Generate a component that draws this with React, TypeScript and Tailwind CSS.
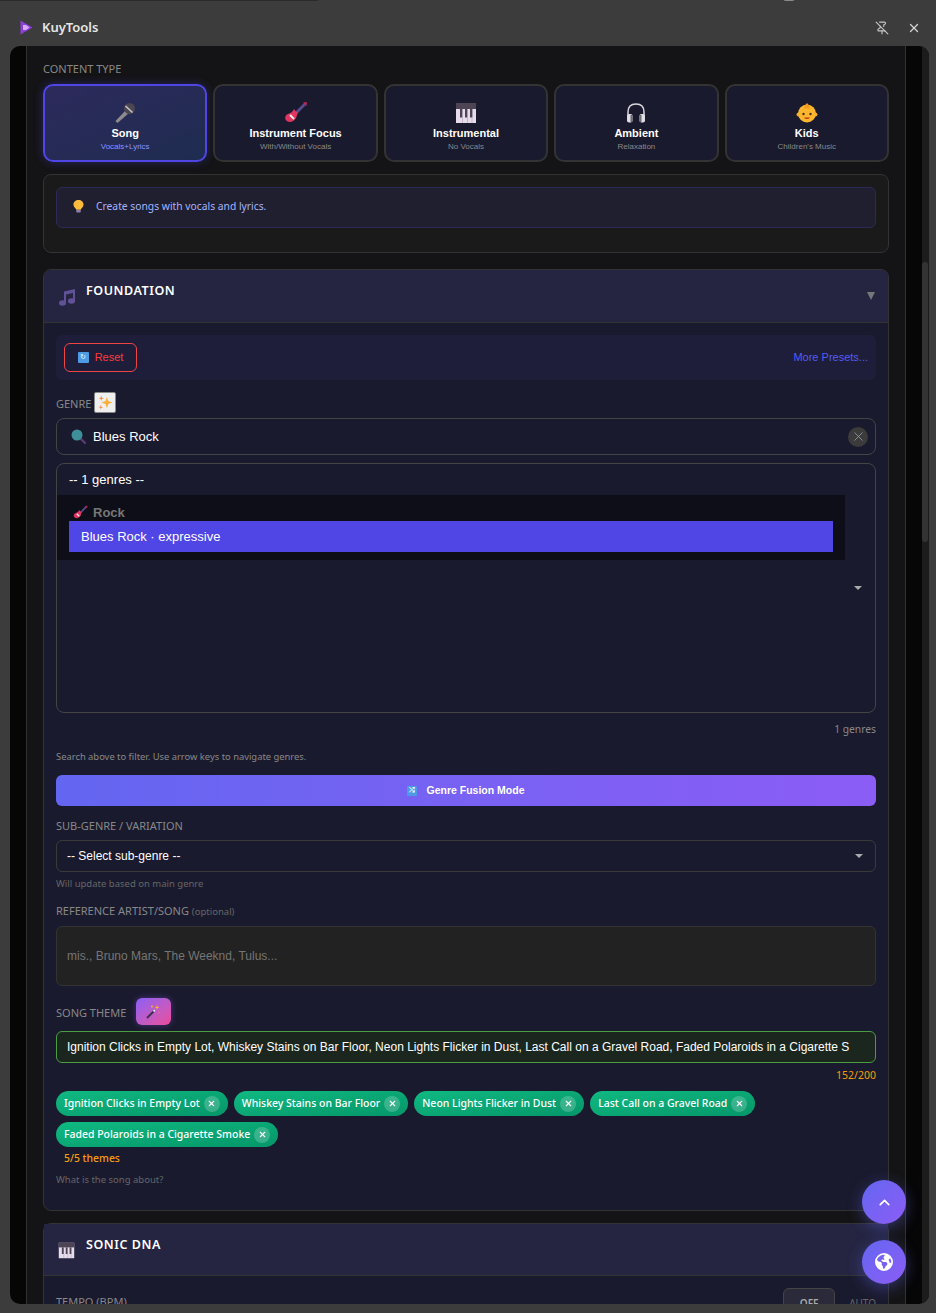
import { ChevronUp, PinOff, X } from 'lucide-react';
import { FaEarthAmericas } from 'react-icons/fa6';

const ui = "font-['Noto_Sans',sans-serif]";
const arial = "font-['Liberation_Sans',Arial,sans-serif]";

function Mic({ size = 24 }: { size?: number }) {
  return (
    <svg width={size} height={size} viewBox="0 0 24 24">
      <path d="M13 9 L2.500 20 L4.500 22 L16 12 Z" fill="#8e8a90" />
      <circle cx="16.500" cy="7.500" r="5.500" fill="#4b4650" />
      <path d="M12.500 5 L19.500 11.500" stroke="#c9c5cc" strokeWidth="1.600" />
    </svg>
  );
}

function Guitar({ size = 24 }: { size?: number }) {
  return (
    <svg width={size} height={size} viewBox="0 0 24 24">
      <path d="M11 11 L20 2 L22 4 L13 13 Z" fill="#5b4a8a" />
      <path d="M19 1.500 L23 1 L22.500 5 Z" fill="#c2255c" />
      <path d="M10 8 C11 10 13 11 14 12 C13 13 13 15 12 17 C10 21 5 22 3 20 C0 18 1 14 4 13 C6 12 8 12 10 8 Z" fill="#e0355f" />
      <path d="M6 14 L10 18" stroke="#f4e9ee" strokeWidth="2" />
    </svg>
  );
}

function Piano({ size = 22 }: { size?: number }) {
  return (
    <svg width={size} height={size} viewBox="0 0 22 22">
      <rect x="1" y="1" width="20" height="20" fill="#e7dcec" />
      <rect x="1" y="1" width="20" height="6" fill="#4d4553" />
      <rect x="5" y="7" width="2.400" height="8.500" fill="#4d4553" />
      <rect x="10" y="7" width="2.400" height="8.500" fill="#4d4553" />
      <rect x="15" y="7" width="2.400" height="8.500" fill="#4d4553" />
      <path d="M7.500 15.500 V21 M12.500 15.500 V21 M17 15.500 V21" stroke="#b5a8c0" strokeWidth="0.700" />
    </svg>
  );
}

function Headphones() {
  return (
    <svg width="22" height="22" viewBox="0 0 22 22">
      <path d="M3 14 V10 C3 4.500 6.500 2 11 2 C15.500 2 19 4.500 19 10 V14" fill="none" stroke="#d8d5da" strokeWidth="1.500" />
      <rect x="2" y="12" width="5.500" height="8.500" rx="2" fill="#e0dde3" />
      <rect x="14.500" y="12" width="5.500" height="8.500" rx="2" fill="#e0dde3" />
      <rect x="5.500" y="13" width="2" height="7" fill="#6f6b74" />
      <rect x="14.500" y="13" width="2" height="7" fill="#6f6b74" />
    </svg>
  );
}

function Baby() {
  return (
    <svg width="22" height="22" viewBox="0 0 22 22">
      <circle cx="2.500" cy="12.500" r="2" fill="#f4a722" />
      <circle cx="19.500" cy="12.500" r="2" fill="#f4a722" />
      <circle cx="11" cy="11.500" r="9" fill="#fbb62e" />
      <path d="M11 1 C13 3 14 5 13.500 7 C12 6 10 6 8.500 7 C8 5 9 3 11 1 Z" fill="#f59a1b" />
      <circle cx="7.500" cy="12" r="1.200" fill="#4a2c14" />
      <circle cx="14.500" cy="12" r="1.200" fill="#4a2c14" />
      <path d="M8 15.500 C9.500 17.500 12.500 17.500 14 15.500 Z" fill="#c2381c" />
    </svg>
  );
}

function Bulb() {
  return (
    <svg width="11" height="15" viewBox="0 0 12 15">
      <path d="M6 0.500 C9 0.500 11.500 2.500 11.500 5.500 C11.500 8 9 9 8.500 11 H3.500 C3 9 0.500 8 0.500 5.500 C0.500 2.500 3 0.500 6 0.500 Z" fill="#fdbc3c" />
      <rect x="3.500" y="11" width="5" height="3" rx="1" fill="#8d7fa6" />
    </svg>
  );
}

function Note({ size = 18 }: { size?: number }) {
  return (
    <svg width={size} height={size} viewBox="0 0 18 18" className="opacity-60">
      <path d="M6 3.500 L17 1 V13 H15 V5 L8 6.500 V15 H6 Z" fill="#8a6fd0" />
      <ellipse cx="4.500" cy="15" rx="3.500" ry="2.800" fill="#8a6fd0" />
      <ellipse cx="13.500" cy="13" rx="3.500" ry="2.800" fill="#8a6fd0" />
    </svg>
  );
}

function Sparkles({ size = 16 }: { size?: number }) {
  return (
    <svg width={size} height={size} viewBox="0 0 16 16">
      <path d="M9.500 2 L11 6.500 L15.500 8 L11 9.500 L9.500 14 L8 9.500 L3.500 8 L8 6.500 Z" fill="#fbb03b" />
      <path d="M3.500 0.500 L4.200 2.800 L6.500 3.500 L4.200 4.200 L3.500 6.500 L2.800 4.200 L0.500 3.500 L2.800 2.800 Z" fill="#f98b3c" />
      <path d="M3 10.500 L3.600 12.400 L5.500 13 L3.600 13.600 L3 15.500 L2.400 13.600 L0.500 13 L2.400 12.400 Z" fill="#f98b3c" />
    </svg>
  );
}

function Wand() {
  return (
    <svg width="15" height="15" viewBox="0 0 15 15">
      <path d="M1 14 L9 6" stroke="#3a2c4a" strokeWidth="1.800" />
      <path d="M7.500 7.500 L9 6" stroke="#e8e2ee" strokeWidth="1.800" />
      <path d="M11 1 L11.600 2.800 L13.400 3.400 L11.600 4 L11 5.800 L10.400 4 L8.600 3.400 L10.400 2.800 Z" fill="#f7b733" />
      <circle cx="6" cy="2.500" r="1" fill="#f7b733" />
      <circle cx="13" cy="8.500" r="1" fill="#f06292" />
    </svg>
  );
}

function Magnifier() {
  return (
    <svg width="15" height="15" viewBox="0 0 15 15">
      <path d="M8.500 8.500 L14 14" stroke="#5a3a78" strokeWidth="2.400" strokeLinecap="round" />
      <circle cx="6" cy="6" r="5.500" fill="#3f8f9a" />
    </svg>
  );
}

function TypeCard({ icon, title, sub, active }: { icon: React.ReactNode; title: string; sub: string; active?: boolean }) {
  return (
    <div
      className={
        active
          ? 'h-[78px] rounded-[10px] border-2 border-[#4f46e5] bg-gradient-to-br from-[#2d2a5c] to-[#1e2c50] shadow-[0_0_10px_rgba(79,70,229,0.35)] flex flex-col items-center pt-[15px]'
          : 'h-[78px] rounded-[10px] border-2 border-[#333] bg-[#1a1a2e] flex flex-col items-center pt-[15px]'
      }
    >
      <div className="h-[24px] flex items-center justify-center">{icon}</div>
      <div className={`${arial} mt-[1px] text-[11px] font-bold leading-[15px] text-white`}>{title}</div>
      <div className={`${arial} text-[8px] leading-[10px] mt-[1px] ${active ? 'text-[#8b93ff]' : 'text-[#888]'}`}>{sub}</div>
    </div>
  );
}

function Chip({ label }: { label: string }) {
  return (
    <div className={`${ui} h-[25px] rounded-full bg-gradient-to-br from-[#10b981] to-[#059669] flex items-center pl-[8px] pr-[8px] gap-[4px] text-[10.47px] font-medium text-white`}>
      <span>{label}</span>
      <span className="w-[16px] h-[16px] rounded-full bg-white/20 flex items-center justify-center">
        <X size={9} strokeWidth={3} />
      </span>
    </div>
  );
}

function SectionHeader({ icon, title, chevron }: { icon: React.ReactNode; title: string; chevron?: boolean }) {
  return (
    <div className={`${chevron ? 'h-[53px]' : 'h-[52px]'} bg-[#252542] border-b border-[#333] flex pl-[14px] pr-[13px]`}>
      <div className="w-[28px] pt-[18px]">{icon}</div>
      <div className={`${ui} pt-[12px] text-[12.5px] font-semibold tracking-[0.55px] leading-[17px] text-white`}>{title}</div>
      {chevron && <div className="ml-auto mt-[22px] w-0 h-0 border-x-[4px] border-x-transparent border-t-[8px] border-t-[#777]" />}
    </div>
  );
}

export default function App() {
  return (
    <div className={`${ui} relative h-[1313px] overflow-hidden bg-[#3c3c3c]`}>
      <div className="h-[1px] w-[318px] bg-[#2a2a2a]" />
      <div className="absolute left-[783px] top-[-5px] w-[12px] h-[6px] rounded-full bg-[#8a8a8a]" />

      {/* title bar */}
      <div className="h-[45px] flex items-center pl-[20px] pr-[15px] pt-[8px]">
        <svg width="13" height="15" viewBox="0 0 13 15">
          <path d="M0.500 0.500 L12.500 7.500 L0.500 14.500 Z" fill="#8b3fd9" />
          <path d="M3 5 H6 L9.500 7.500 L6 10 H3 Z" fill="#d8a8ff" />
        </svg>
        <span className="ml-[9px] text-[13px] font-semibold text-[#e6e6e6]">KuyTools</span>
        <PinOff size={14} className="ml-auto text-[#c4c4c4]" />
        <X size={14} strokeWidth={2.200} className="ml-[18px] text-[#d4d4d4]" />
      </div>

      {/* window */}
      <div className="ml-[10px] mr-[7px] h-[1258px] rounded-[10px] bg-[#060607] overflow-hidden flex">
        <div className="w-[16px] shrink-0" />
        <div className="w-[880px] shrink-0 h-full border-x border-[#333] bg-[#141416] overflow-hidden px-[16px]">
          <div className="pt-[16px] h-[38px] text-[11px] leading-[14px] text-[#888]">CONTENT TYPE</div>

          <div className="grid grid-cols-5 gap-[6px]">
            <TypeCard active icon={<Mic />} title="Song" sub="Vocals+Lyrics" />
            <TypeCard icon={<Guitar />} title="Instrument Focus" sub="With/Without Vocals" />
            <TypeCard icon={<Piano />} title="Instrumental" sub="No Vocals" />
            <TypeCard icon={<Headphones />} title="Ambient" sub="Relaxation" />
            <TypeCard icon={<Baby />} title="Kids" sub="Children's Music" />
          </div>

          <div className="mt-[12px] h-[79px] rounded-[8px] border border-[#333] bg-[#1a1a1a] px-[12px] pt-[12px]">
            <div className="h-[41px] rounded-[6px] border border-[#2c2b58] bg-[#1f1f30] pb-[2px] flex items-center pl-[16px] text-[10.3px] text-[#a5b4fc]">
              <Bulb />
              <span className="ml-[12px]">Create songs with vocals and lyrics.</span>
            </div>
          </div>

          {/* foundation */}
          <div className="mt-[16px] h-[942px] rounded-[8px] border border-[#333] bg-[#1a1a2e] overflow-hidden">
            <SectionHeader icon={<Note />} title="FOUNDATION" chevron />
            <div className="px-[12px] pt-[12px]">
              <div className="h-[45px] rounded-[6px] bg-[#1e1e3a] flex items-center pl-[8px] pr-[8px]">
                <div className={`${arial} w-[73px] h-[29px] rounded-[6px] border border-[#ef4444] flex items-center justify-center gap-[6px] text-[11px] text-[#ff3b3b]`}>
                  <span className="w-[11px] h-[11px] rounded-[1px] bg-[#4d9be6] flex items-center justify-center text-[7px] text-white">↻</span>
                  Reset
                </div>
                <span className={`${arial} ml-auto text-[11px] text-[#525cf5]`}>More Presets...</span>
              </div>

              <div className="mt-[12px] h-[26px] flex items-start">
                <span className="mt-[5px] text-[11px] leading-[14px] text-[#888]">GENRE</span>
                <span className="ml-[3px] w-[22px] h-[21px] rounded-[2px] border border-[#888] bg-[#efefef] flex items-center justify-center">
                  <Sparkles size={15} />
                </span>
              </div>

              <div className={`${arial} h-[37px] rounded-[8px] border border-[#444] flex items-center pl-[14px] pr-[7px] text-[13px] text-white`}>
                <Magnifier />
                <span className="ml-[7px]">Blues Rock</span>
                <span className="ml-auto w-[20px] h-[20px] rounded-full bg-[#3b3b3b] flex items-center justify-center text-[#8a9aa0]">
                  <X size={15} strokeWidth={1.400} />
                </span>
              </div>

              <div className={`${arial} relative mt-[8px] h-[250px] rounded-[8px] border border-[#444] text-[13px]`}>
                <div className="h-[31px] pl-[12px] flex items-center text-white">-- 1 genres --</div>
                <div className="w-[788px] h-[65px] bg-[#0e0e18]">
                  <div className="h-[26px] pl-[16px] pt-[9px] flex items-center font-bold text-[#777] gap-[5px]">
                    <Guitar size={15} />
                    Rock
                  </div>
                  <div className="ml-[12px] w-[764px] h-[31px] bg-[#4f46e5] pl-[12px] flex items-center text-white">Blues Rock · expressive</div>
                </div>
                <div className="absolute right-[13px] top-[122px] w-0 h-0 border-x-[4px] border-x-transparent border-t-[4px] border-t-[#aaa]" />
              </div>

              <div className="mt-[9px] text-right text-[10.3px] leading-[14px] text-[#888]">1 genres</div>
              <div className="mt-[14px] text-[9.4px] leading-[14px] text-[#888]">Search above to filter. Use arrow keys to navigate genres.</div>

              <div className={`${arial} mt-[11px] h-[31px] rounded-[6px] bg-gradient-to-r from-[#6366f1] to-[#8b5cf6] flex items-center justify-center gap-[9px] text-[10.5px] font-bold text-white`}>
                <span className="w-[10px] h-[10px] rounded-[1px] bg-[#4d9be6] flex items-center justify-center text-[7px]">⤮</span>
                Genre Fusion Mode
              </div>

              <div className="mt-[13px] text-[11px] leading-[14px] text-[#888]">SUB-GENRE / VARIATION</div>
              <div className={`${arial} relative mt-[7px] h-[32px] rounded-[6px] border border-[#3a3a3a] flex items-center pl-[10px] text-[12px] text-white`}>
                -- Select sub-genre --
                <div className="absolute right-[12px] top-[13px] w-0 h-0 border-x-[4px] border-x-transparent border-t-[4px] border-t-[#aaa]" />
              </div>
              <div className="mt-[5px] text-[9.5px] leading-[14px] text-[#666]">Will update based on main genre</div>

              <div className="mt-[13px] text-[11px] leading-[14px] text-[#888]">
                REFERENCE ARTIST/SONG <span className="text-[9.5px] text-[#666]">(optional)</span>
              </div>
              <div className={`${arial} mt-[7px] h-[60px] rounded-[6px] border border-[#333] bg-[#222] flex items-center pl-[10px] text-[12px] text-[#757575]`}>
                mis., Bruno Mars, The Weeknd, Tulus...
              </div>

              <div className="mt-[12px] h-[33px] flex items-start">
                <span className="mt-[8px] text-[11px] leading-[14px] text-[#888]">SONG THEME</span>
                <span className="ml-[10px] w-[35px] h-[27px] rounded-[6px] bg-gradient-to-br from-[#8b5cf6] to-[#ec4899] flex items-center justify-center shadow-[0_0_6px_rgba(139,92,246,0.4)]">
                  <Wand />
                </span>
              </div>

              <div className={`${arial} h-[32px] rounded-[6px] border border-[#4a9d40] bg-[#1b261e] flex items-center pl-[10px] text-[12px] text-white whitespace-nowrap overflow-hidden`}>
                Ignition Clicks in Empty Lot, Whiskey Stains on Bar Floor, Neon Lights Flicker in Dust, Last Call on a Gravel Road, Faded Polaroids in a Cigarette S
              </div>
              <div className="mt-[5px] text-right text-[10.5px] leading-[14px] text-[#f59e0b]">152/200</div>

              <div className="mt-[9px] flex flex-wrap gap-x-[6px] gap-y-[6px]">
                <Chip label="Ignition Clicks in Empty Lot" />
                <Chip label="Whiskey Stains on Bar Floor" />
                <Chip label="Neon Lights Flicker in Dust" />
                <Chip label="Last Call on a Gravel Road" />
                <Chip label="Faded Polaroids in a Cigarette Smoke" />
              </div>
              <div className="mt-[4px] pl-[8px] text-[10.4px] leading-[14px] font-medium text-[#f59e0b]">5/5 themes</div>
              <div className="mt-[8px] text-[9.5px] leading-[14px] text-[#666]">What is the song about?</div>
            </div>
          </div>

          {/* sonic dna */}
          <div className="mt-[12px] rounded-t-[8px] border border-[#333] bg-[#1a1a2e] h-[200px]">
            <SectionHeader icon={<Piano size={17} />} title="SONIC DNA" />
            <div className="px-[12px] pt-[12px] flex items-start">
              <span className="mt-[7px] text-[11px] leading-[14px] text-[#888]">TEMPO (BPM)</span>
              <span className="ml-auto w-[52px] h-[28px] rounded-[6px] border border-[#444] bg-[#2a2a3a] text-center text-[10px] font-semibold leading-[28px] text-[#aaa]">OFF</span>
              <span className="ml-[14px] mt-[8px] text-[10px] leading-[14px] text-[#666]">AUTO</span>
            </div>
          </div>
        </div>
        <div className="w-[16px] shrink-0" />
        <div className="w-[7px] shrink-0 bg-[#1c1c1c] pt-[216px]">
          <div className="h-[280px] w-[6px] rounded-full bg-[#333]" />
        </div>
      </div>

      {/* floating buttons */}
      <div className="absolute left-[862px] top-[1180px] flex flex-col gap-[16px]">
        <div className="w-[44px] h-[44px] rounded-full bg-gradient-to-br from-[#6366f1] to-[#8b5cf6] shadow-[0_4px_15px_rgba(99,102,241,0.4)] flex items-center justify-center text-white">
          <ChevronUp size={17} strokeWidth={2.400} />
        </div>
        <div className="w-[44px] h-[44px] rounded-full bg-gradient-to-br from-[#6366f1] to-[#8b5cf6] shadow-[0_4px_15px_rgba(99,102,241,0.4)] flex items-center justify-center text-white">
          <FaEarthAmericas size={18} />
        </div>
      </div>
    </div>
  );
}
